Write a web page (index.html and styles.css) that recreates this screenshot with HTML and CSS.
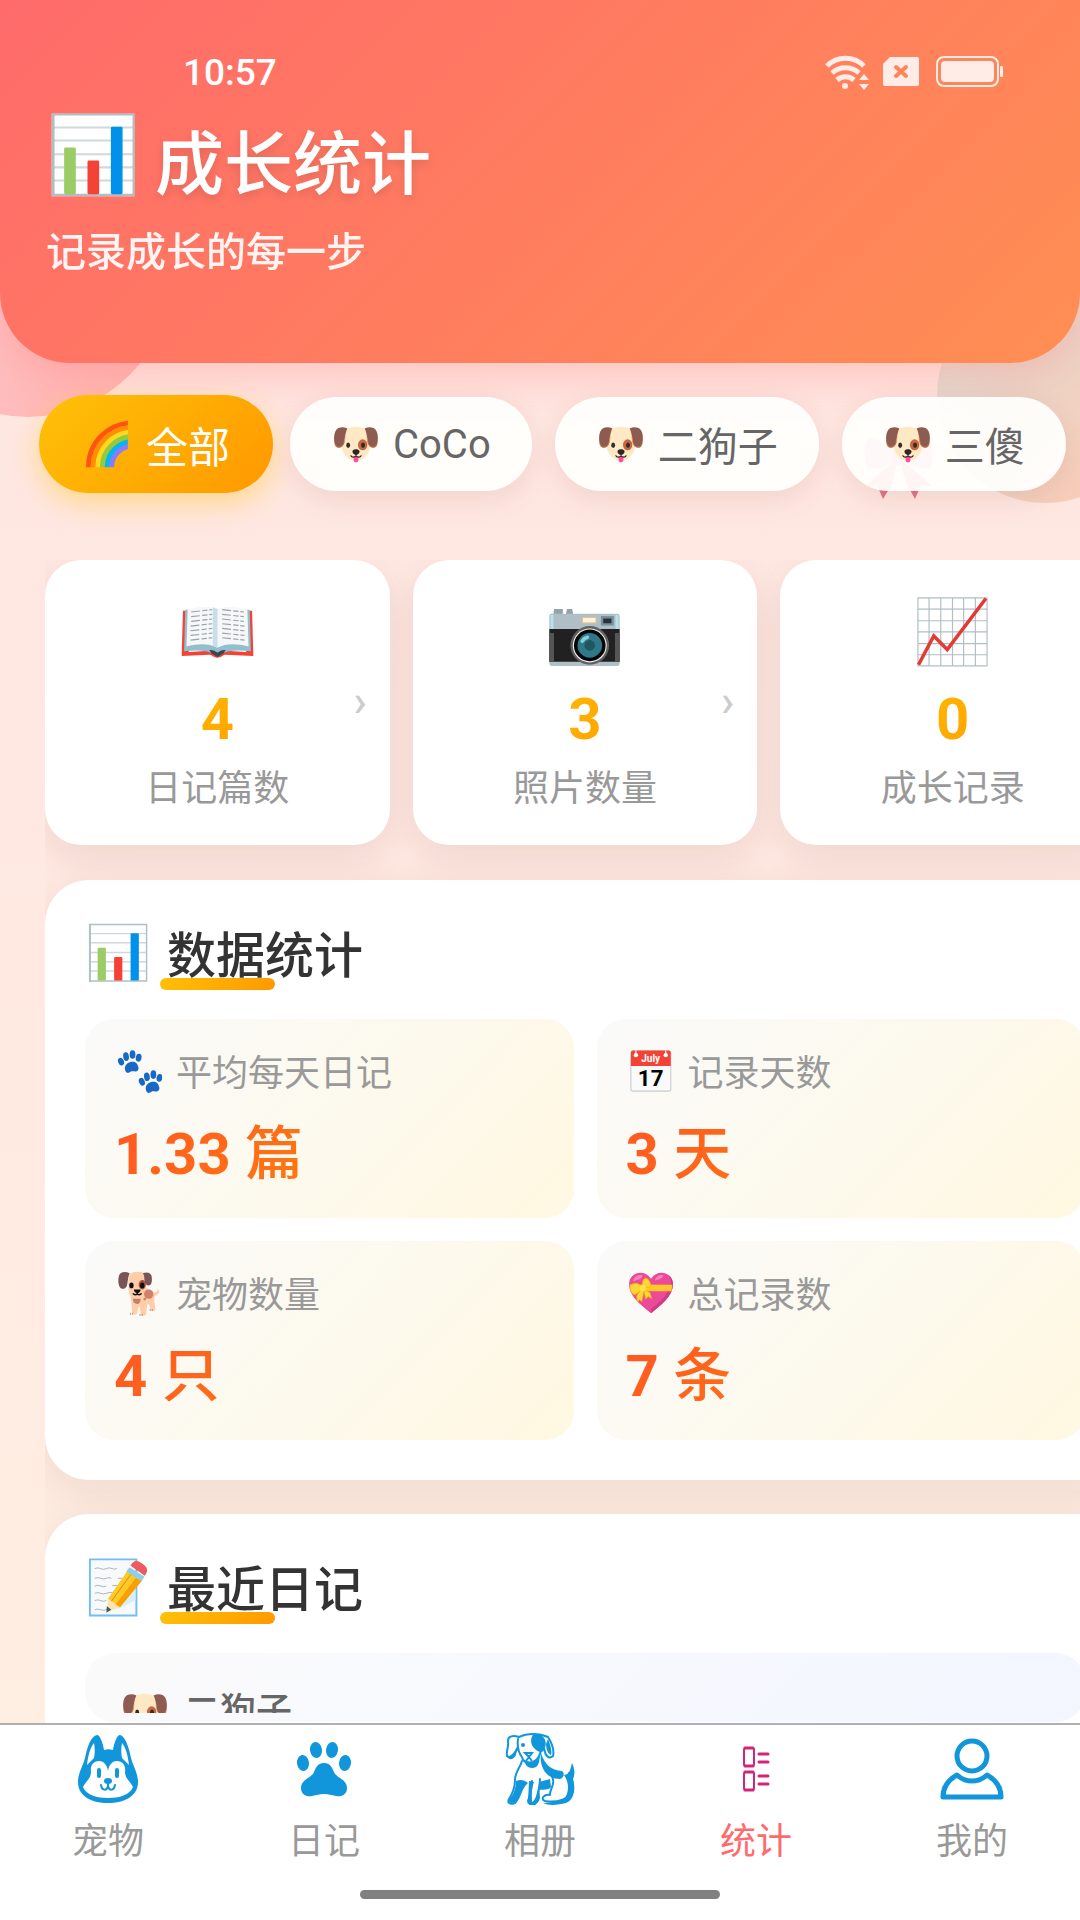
FILE: index.html
```html
<!DOCTYPE html>
<html lang="zh-CN">
<head>
    <meta charset="UTF-8">
    <meta name="viewport" content="width=device-width, initial-scale=1.0">
    <title>成长统计</title>
    <link rel="stylesheet" href="styles.css">
</head>
<body>
    <!-- Shared icons -->
    <svg class="sprite" aria-hidden="true">
        <symbol id="i-bars" viewBox="0 0 128 128">
            <path fill="#fff" d="M4 4h120v120H4z"/>
            <path stroke="#cfd8dc" stroke-width="3" d="M4 24h120M4 43h120M4 63h120M4 82h120M4 101h120"/>
            <path fill="none" stroke="#b0bec5" stroke-width="3" d="M6 5h117v117H6z"/>
            <path stroke="#b0bec5" stroke-width="4" d="M6 4v120"/>
            <rect x="22" y="53" width="17" height="68" rx="2" fill="#9ccc65"/>
            <rect x="56" y="72" width="17" height="49" rx="2" fill="#f44336"/>
            <rect x="90" y="23" width="17" height="98" rx="2" fill="#0091ea"/>
        </symbol>
        <symbol id="i-rainbow" viewBox="0 0 128 128">
            <clipPath id="rainbow-clip"><path d="M8 4h105v117H8z"/></clipPath>
            <g fill="none" stroke-width="12" clip-path="url(#rainbow-clip)">
                <circle cx="125" cy="121" r="109" stroke="#ff5216"/>
                <circle cx="125" cy="121" r="98" stroke="#ff8f00"/>
                <circle cx="125" cy="121" r="86" stroke="#fdd922"/>
                <circle cx="125" cy="121" r="75" stroke="#97c93c"/>
                <circle cx="125" cy="121" r="63" stroke="#00b8f0"/>
                <circle cx="125" cy="121" r="52" stroke="#8a7bfb"/>
            </g>
        </symbol>
        <symbol id="i-dogface" viewBox="0 0 128 128">
            <path fill="#ffe8c4" d="M64 20c22 0 32 9 35 25 2 15 4 28-3 41-6 12-18 22-32 22s-26-10-32-22c-7-13-5-26-3-41 3-16 13-25 35-25z"/>
            <ellipse cx="81" cy="66" rx="12" ry="14" fill="#c9663f"/>
            <path fill="#8d5b4f" d="M42 24c-12-5-25-3-30 6-5 9-5 25-2 36 2 8 10 10 18 5 7-5 6-15 8-26 1-8 3-15 6-21z"/>
            <path fill="#8d5b4f" d="M86 24c12-5 25-3 30 6 5 9 5 25 2 36-2 8-10 10-18 5-7-5-6-15-8-26-1-8-3-15-6-21z"/>
            <path fill="none" stroke="#dc8b5a" stroke-width="2" d="M10 63c3 10 11 12 19 6 6-5 5-14 7-24M118 63c-3 10-11 12-19 6-6-5-5-14-7-24"/>
            <ellipse cx="44" cy="67" rx="5" ry="7" fill="#302c2b"/>
            <ellipse cx="82" cy="67" rx="5" ry="7" fill="#302c2b"/>
            <path fill="#ff4b9b" d="M58 95h12v10c0 8-12 8-12 0z"/>
            <path fill="#2b2727" d="M55 82c2-6 16-6 18 0 1 6-5 10-9 10s-10-4-9-10z"/>
            <path fill="none" stroke="#2b2727" stroke-width="3" stroke-linecap="round" d="M64 90v5m0 0c-5 4-11 3-13-1m13 1c5 4 11 3 13-1"/>
        </symbol>
        <symbol id="i-bow" viewBox="0 0 72 66">
            <path fill="#e0566f" d="M31 27C20 38 11 42 5 52l9-1 6 14 8-13c3-9 5-16 6-23zM41 27c10 11 19 15 27 25l-10-1-6 14-7-13c-4-9-6-16-7-23z"/>
            <path fill="#f78fa7" d="M33 17C22 8 10 3 5 5 1 10 1 27 5 34c9 2 21-3 28-8zM39 17C50 8 62 3 67 5c4 5 4 22 0 29-9 2-21-3-28-8z"/>
            <rect x="29" y="13" width="14" height="18" rx="6" fill="#ef6c88"/>
        </symbol>
        <symbol id="i-book" viewBox="0 0 128 128">
            <path fill="#f44336" d="M5 27h10v72H3zM123 27h-10v72h12z"/>
            <path fill="#f44336" d="M3 98l46-3 15 9 15-9 46 3v6l-47-2c-5-1-6 5-14 5s-9-6-14-5l-47 2z"/>
            <path fill="#90bfce" d="M9 25h110l2 71c-20-2-39-3-57 7-18-10-37-9-57-7z"/>
            <path fill="#f5f7f8" d="M13 25c22-6 39-7 51 0v65c-15-8-33-7-53-2zM115 25c-22-6-39-7-51 0v65c15-8 33-7 53-2z"/>
            <path fill="#c9dfe7" d="M56 21l8 3v66l-8-4z"/>
            <path stroke="#9aa3a7" stroke-width="2" stroke-dasharray="15 4 9 3" d="M19 29l36-4M19 37l36-4M19 45l36-4M18 53l37-4M18 61l37-4M18 69l37-4M18 77l37-4M72 25l37 4M72 33l37 4M72 41l37 4M72 49l38 4M72 57l38 4M72 65l38 4M72 73l38 4"/>
            <path fill="#37474f" d="M50 94c7-1 9 2 14 4 5-2 7-5 14-4l-4 6-10 6-10-6z"/>
        </symbol>
        <symbol id="i-camera" viewBox="0 0 128 128">
            <path fill="#90a4ae" d="M12 24h15v10H11zM34 24h9l2 10H32z"/>
            <rect x="4" y="32" width="120" height="89" rx="4" fill="#b0bec5"/>
            <path fill="#b3e5ee" d="M6 34h5v24H6zM117 34h5v24h-5z"/>
            <path fill="#212121" d="M4 58h120v56H4z"/>
            <path fill="#555" d="M4 65h8v49H4zM116 65h8v49h-8z"/>
            <path fill="#fff3d4" stroke="#cbbd9f" stroke-width="2" d="M60 38h24v10H60z"/>
            <path fill="#263238" stroke="#78909c" stroke-width="4" d="M94 38h18v12H94z"/>
            <circle cx="73" cy="86" r="33" fill="#616161"/>
            <circle cx="73" cy="86" r="29" fill="#eee"/>
            <circle cx="73" cy="86" r="27" fill="#050505"/>
            <circle cx="73" cy="86" r="21" fill="#2f7889"/>
            <circle cx="73" cy="86" r="9" fill="#22565f"/>
            <path fill="none" stroke="#83cedd" stroke-width="6" stroke-linecap="round" d="M60 79c2-4 5-6 9-7"/>
        </symbol>
        <symbol id="i-trend" viewBox="0 0 128 128">
            <path fill="#fff" d="M4 4h119v117H4z"/>
            <path fill="none" stroke="#b0bec5" stroke-width="2" d="M5 5h118v116H5zM24 5v116M44 5v116M64 5v116M83 5v116M103 5v116M5 24h118M5 44h118M5 63h118M5 83h118M5 102h118"/>
            <path fill="none" stroke="#e53935" stroke-width="6" d="M6 119l26-49 23 23 66-87"/>
        </symbol>
        <symbol id="i-memo" viewBox="0 0 128 128">
            <path fill="#f7f9fa" stroke="#74bff2" stroke-width="4" d="M6 7h96v116H6z"/>
            <path fill="none" stroke="#a4b5be" stroke-width="2" d="M16 26q6-3 12 0t12 0 12 0 10-1M16 46q6-3 12 0t12 0 10 0M64 46h18M16 62q6-3 12 0t12 0M52 61h18M16 77q6-3 12 0t12 0 16-1M16 92q6-3 12 0t12 0M16 111q6-3 12 0t18-2"/>
            <path fill="#d8eefb" d="M100 62v29L68 108l-14 1z"/>
            <path fill="#ffca28" d="M84 30l30 20-46 56-25-17z"/>
            <path fill="#f9a000" d="M103 43l11 7-46 56-9-6z"/>
            <path stroke="#d88b00" stroke-width="2" d="M92 36L50 94"/>
            <path fill="#fae5b0" d="M43 89l25 17-26 10z"/>
            <path fill="#455a64" d="M41 103l9 8-10 6z"/>
            <path fill="#90cfe3" d="M88 23l31 20-7 9-31-20z"/>
            <path fill="#ee5a61" d="M90 20c6-12 13-12 23-5 12 8 15 15 6 26z"/>
        </symbol>
        <symbol id="i-paws" viewBox="0 0 128 128">
            <g id="paw-print" fill="#1769c5">
                <ellipse cx="14" cy="38" rx="8" ry="11" transform="rotate(-22 14 38)"/>
                <ellipse cx="28" cy="24" rx="8" ry="12" transform="rotate(-8 28 24)"/>
                <ellipse cx="46" cy="18" rx="8" ry="12"/>
                <ellipse cx="63" cy="27" rx="8" ry="11" transform="rotate(12 63 27)"/>
                <path d="M26 63c-5-13 5-24 18-25s16 7 18 14c3 9-3 14-11 13-8-1-9 0-14 3-6 3-9 0-11-5z"/>
            </g>
            <use href="#paw-print" x="58" y="56"/>
        </symbol>
        <symbol id="i-dog" viewBox="0 0 128 128">
            <path fill="#ffcda8" d="M39 12c7-9 34-9 42-1 6 10 6 24 1 36 8 7 16 13 22 15 8 2 12-2 12-9 7 6 5 15-8 19-2 5-2 13-1 19l3 19c-2 7-13 5-15 0-1-10-1-13-7-16-3 8-3 18-4 28-3 8-14 7-15-1l-4-20c-4 3-5 12-6 19-3 6-13 5-14-1-2-20-1-35-6-48-5-14-7-43 0-59z"/>
            <path fill="#795458" d="M38 9C27 3 13 4 9 14c-4 11-3 27 2 34 5 7 15 5 19-3 3-9 3-26 8-36zM75 9c12-5 23 0 24 8 2 10 1 22-4 25-12 4-15-5-16-16 0-7-1-12-4-17z"/>
            <ellipse cx="73" cy="41" rx="10" ry="13" fill="#a94f3f"/>
            <ellipse cx="91" cy="67" rx="13" ry="13" fill="#d18169"/>
            <path fill="#c77f68" d="M47 80h22c-1 12-6 16-12 14-7-1-10-6-10-14z"/>
            <circle cx="80" cy="81" r="4" fill="#d18169"/>
            <ellipse cx="43" cy="43" rx="6" ry="8" fill="#111"/>
            <ellipse cx="73" cy="43" rx="6" ry="8" fill="#111"/>
            <path fill="#111" d="M50 54h18c1 7-5 10-9 10s-10-4-9-10z"/>
            <path fill="none" stroke="#111" stroke-width="4" stroke-linecap="round" d="M59 63v4m0 0q-6 4-11-1m11 1q6 4 11-1"/>
            <path stroke="#b76b60" stroke-width="2" d="M40 119v6M46 119v6M67 122v6M73 122v6M95 109v5M101 109v5"/>
        </symbol>
        <symbol id="i-heart" viewBox="0 0 128 128">
            <path fill="#ec4a98" d="M64 120C35 97 3 73 3 39 3 7 45-5 64 24 83-5 125 7 125 39c0 34-32 58-61 81z"/>
            <path fill="#d03b85" d="M113 14c18 24 2 55-49 94v12c29-23 61-47 61-81 0-10-4-19-12-25z"/>
            <path fill="#f684b9" d="M14 31c2-13 14-18 26-17 2 8-9 14-26 17zM75 29c2-12 13-17 23-15 1 8-9 12-23 15z"/>
            <path fill="#ffca28" d="M5 40l118 1-2 18H9z"/>
            <path fill="#fdd835" stroke="#f4b400" stroke-width="2" d="M39 49C31 35 18 34 7 42c-3 11 2 22 10 27 9-2 18-9 22-20zM42 47c-4-14 0-24 9-24 10 5 15 20 10 25zM36 54l-12 18 2 16 7-6 5 6 7-32zM44 54l5 27 7-7 10 5-5-16z"/>
            <circle cx="41" cy="50" r="9" fill="#ffe246"/>
        </symbol>
    </svg>

    <div class="page">
        <span class="blob blob-left"></span>
        <span class="blob blob-right"></span>
        <svg class="bow" aria-hidden="true"><use href="#i-bow"/></svg>

        <header class="header">
            <div class="status-bar">
                <span class="time">10:57</span>
                <svg class="wifi" viewBox="0 0 44 36" aria-hidden="true">
                    <g fill="none" stroke="#ffece6" stroke-width="5">
                        <path d="M2 12a26 26 0 0 1 37 0"/>
                        <path d="M7 19a20 20 0 0 1 27 0"/>
                        <path d="M12 26a13 13 0 0 1 17 0"/>
                    </g>
                    <circle cx="20" cy="32" r="3" fill="#ffece6"/>
                    <path fill="#ffece6" d="M34 26l5-6 5 6zM34 30h10l-5 6z"/>
                </svg>
                <svg class="sim" viewBox="0 0 36 30" aria-hidden="true">
                    <path fill="#ffece6" d="M7 0h27q2 0 2 2v25q0 2-2 2H2q-2 0-2-2V7z"/>
                    <path stroke="#ff8559" stroke-width="4" stroke-linecap="round" d="M13 10l10 9M23 10l-10 9"/>
                </svg>
                <svg class="battery" viewBox="0 0 68 32" aria-hidden="true">
                    <rect x="1" y="1" width="61" height="29" rx="7" fill="none" stroke="#ffece6" stroke-width="2"/>
                    <rect x="5" y="5" width="53" height="21" rx="4" fill="#ffece6"/>
                    <rect x="64" y="10" width="3" height="11" rx="1" fill="#ffece6"/>
                </svg>
            </div>
            <h1 class="title">
                <svg class="title-icon" aria-hidden="true"><use href="#i-bars"/></svg>
                <span>成长统计</span>
            </h1>
            <p class="subtitle">记录成长的每一步</p>
        </header>

        <div class="filters">
            <button class="chip chip-active"><svg class="chip-icon" aria-hidden="true"><use href="#i-rainbow"/></svg>全部</button>
            <button class="chip"><svg class="chip-icon" aria-hidden="true"><use href="#i-dogface"/></svg>CoCo</button>
            <button class="chip"><svg class="chip-icon" aria-hidden="true"><use href="#i-dogface"/></svg>二狗子</button>
            <button class="chip"><svg class="chip-icon" aria-hidden="true"><use href="#i-dogface"/></svg>三傻</button>
        </div>

        <main class="content">
            <div class="content-inner">
                <div class="cards">
                    <a class="card" href="#diary">
                        <svg class="card-icon" aria-hidden="true"><use href="#i-book"/></svg>
                        <span class="card-number">4</span>
                        <span class="card-label">日记篇数</span>
                        <span class="card-arrow">›</span>
                    </a>
                    <a class="card" href="#photos">
                        <svg class="card-icon" aria-hidden="true"><use href="#i-camera"/></svg>
                        <span class="card-number">3</span>
                        <span class="card-label">照片数量</span>
                        <span class="card-arrow">›</span>
                    </a>
                    <a class="card" href="#growth">
                        <svg class="card-icon" aria-hidden="true"><use href="#i-trend"/></svg>
                        <span class="card-number">0</span>
                        <span class="card-label">成长记录</span>
                    </a>
                </div>

                <section class="panel">
                    <h2 class="panel-title">
                        <svg class="panel-icon" aria-hidden="true"><use href="#i-bars"/></svg>
                        <span class="panel-text">数据统计</span>
                    </h2>
                    <div class="data-grid">
                        <div class="data-item">
                            <div class="data-label"><svg class="data-icon" aria-hidden="true"><use href="#i-paws"/></svg>平均每天日记</div>
                            <div class="data-value">1.33 <span class="unit">篇</span></div>
                        </div>
                        <div class="data-item">
                            <div class="data-label">
                                <svg class="data-icon" viewBox="0 0 128 128" aria-hidden="true">
                                    <rect x="8" y="8" width="111" height="112" rx="6" fill="#fafafa" stroke="#c5cdd1" stroke-width="3"/>
                                    <path fill="#f44336" d="M8 13q0-6 6-6h99q6 0 6 6v37H8z"/>
                                    <circle cx="22" cy="20" r="6" fill="#fff"/>
                                    <circle cx="105" cy="20" r="6" fill="#fff"/>
                                    <path stroke="#fff" stroke-width="3" d="M22 6v12M105 6v12"/>
                                    <text x="63" y="38" class="cal-month">July</text>
                                    <text x="63" y="107" class="cal-day">17</text>
                                </svg>记录天数</div>
                            <div class="data-value">3 <span class="unit">天</span></div>
                        </div>
                        <div class="data-item">
                            <div class="data-label"><svg class="data-icon" aria-hidden="true"><use href="#i-dog"/></svg>宠物数量</div>
                            <div class="data-value">4 <span class="unit">只</span></div>
                        </div>
                        <div class="data-item">
                            <div class="data-label"><svg class="data-icon" aria-hidden="true"><use href="#i-heart"/></svg>总记录数</div>
                            <div class="data-value">7 <span class="unit">条</span></div>
                        </div>
                    </div>
                </section>

                <section class="panel" id="diary">
                    <h2 class="panel-title">
                        <svg class="panel-icon" aria-hidden="true"><use href="#i-memo"/></svg>
                        <span class="panel-text">最近日记</span>
                    </h2>
                    <div class="diary-item">
                        <div class="diary-head"><svg class="chip-icon" aria-hidden="true"><use href="#i-dogface"/></svg>二狗子</div>
                    </div>
                </section>
            </div>
        </main>

        <footer class="footer">
            <nav class="tabs">
                <a class="tab" href="#pets">
                    <svg class="tab-icon" viewBox="-4 0 72 72" aria-hidden="true">
                        <path fill="#1296db" d="M21 2c3 0 6 8 7 15 3-1 6-1 9 0 1-7 4-15 7-15 5 1 9 12 11 23 2 8 7 15 7 24 0 14-13 21-30 21S2 63 2 49c0-9 5-16 7-24C11 14 15 3 21 2z"/>
                        <path fill="#fff" d="M18 10c-4 5-6 13-7 22l7-7c1-5 1-10 0-15zM46 10c4 5 6 13 7 22l-7-7c-1-5-1-10 0-15z"/>
                        <path fill="#fff" d="M32 38c-1-7-5-10-9-10-6 0-9 5-8 11 0 7-6 10-8 15 3 8 14 11 25 11s22-3 25-11c-2-5-8-8-8-15 1-6-2-11-8-11-4 0-8 3-9 10z"/>
                        <rect x="21" y="35" width="4" height="10" rx="2" fill="#1296db"/>
                        <rect x="39" y="35" width="4" height="10" rx="2" fill="#1296db"/>
                        <ellipse cx="32" cy="48" rx="4" ry="3" fill="#1296db"/>
                        <path fill="none" stroke="#1296db" stroke-width="2" stroke-linecap="round" d="M25 52c1 6 6 6 7 1 1 5 6 5 7-1M32 50v3"/>
                    </svg>
                    <span>宠物</span>
                </a>
                <a class="tab" href="#diaries">
                    <svg class="tab-icon" viewBox="-4 -5 72 72" aria-hidden="true">
                        <g fill="#1296db">
                            <ellipse cx="11" cy="25" rx="6" ry="8" transform="rotate(-8 11 25)"/>
                            <ellipse cx="24" cy="12" rx="6" ry="8" transform="rotate(-8 24 12)"/>
                            <ellipse cx="40" cy="12" rx="6" ry="8" transform="rotate(8 40 12)"/>
                            <ellipse cx="53" cy="25" rx="6" ry="8" transform="rotate(8 53 25)"/>
                            <path d="M32 25c6 0 8 4 10 9 2 6 13 7 13 16 0 7-6 9-11 8-5-1-7-2-12-2s-7 1-12 2c-5 1-11-1-11-8 0-9 11-10 13-16 2-5 4-9 10-9z"/>
                        </g>
                    </svg>
                    <span>日记</span>
                </a>
                <a class="tab" href="#photos">
                    <svg class="tab-icon" viewBox="0 2 72 72" aria-hidden="true">
                        <g fill="none" stroke="#1296db" stroke-width="2" stroke-linejoin="round" stroke-linecap="round">
                            <path d="M15 6C9 4 4 5 4 10c1 6-2 9-1 15 4 4 8-2 11-9M15 6c8-4 20-4 29 0 5 8 6 15 5 19-3 3-7 1-8-4L38 9M14 8c-1 8 0 13 4 18 1 5 6 6 11 5 5-2 8-8 8-14"/>
                            <path d="M18 30c-2 7-7 11-7 19 0 7-2 13-6 19-2 4 1 6 6 4 6-6 5-14 11-20M28 50c0 8-2 14-4 20 0 4 7 5 8 1 2-9 4-16 4-23M47 44c6 8-2 15-1 20-6-1-10 4-5 6 12 2 24-2 26-8 2-6 2-14-2-20"/>
                        </g>
                        <g fill="#1296db">
                            <path d="M30 3c8-1 14 5 11 14-1 5-6 5-10 1-5-4-5-12-1-15z"/>
                            <path d="M44 8c3 7 4 13 3 16-3-1-5-6-5-11zM4 25c3 0 6-3 9-9l-1 8c-3 6-9 5-8 1z"/>
                            <path d="M20 29c5 5 12 3 16-4-1 8-2 12-8 12-4 0-7-3-8-8zM37 22c4 12 10 17 21 18 3 2 2 7-2 8-13 0-21-11-19-26z"/>
                            <path d="M12 50c5-2 8-1 12 2-6 5-8 14-12 19-5 2-8 1-8-3 5-1 8-11 8-18zM25 50l5 1c-3 7-2 15-2 20 3-1 6-10 7-18l1 14c-2 9-12 9-12 4zM35 51l11-3 1 8c-3 4-9 2-12 3z"/>
                            <path d="M60 44c6-1 6-5 8-12 3 6 3 12 1 16 3 10 1 21-7 24-8 2-17 3-23 0 10-1 21-1 24-9 2-7 1-13-3-19z"/>
                        </g>
                        <circle cx="19" cy="14" r="2" fill="#1296db"/>
                        <path fill="none" stroke="#1296db" stroke-width="2" d="M21 22h7l-3 4zM25 26l-3 4M25 26l3 4"/>
                    </svg>
                    <span>相册</span>
                </a>
                <a class="tab tab-active" href="#stats">
                    <svg class="tab-icon" viewBox="-4 -4 72 72" aria-hidden="true">
                        <g fill="none" stroke="#d4237a" stroke-width="2">
                            <rect x="20" y="11" width="10" height="18" rx="2"/>
                            <rect x="20" y="35" width="10" height="18" rx="2"/>
                            <path stroke-width="3" stroke-linecap="round" d="M21 11h8M21 29h8M21 35h8M21 53h8M35 17h9M35 25h9M35 39h9M35 47h9"/>
                        </g>
                    </svg>
                    <span>统计</span>
                </a>
                <a class="tab" href="#me">
                    <svg class="tab-icon" viewBox="-4 -4 72 72" aria-hidden="true">
                        <g fill="none" stroke="#1296db" stroke-width="5" stroke-linejoin="round">
                            <circle cx="32" cy="19" r="15"/>
                            <path d="M17 38c9 8 21 8 30 0 9 5 14 13 14 22H3c0-9 5-17 14-22z"/>
                        </g>
                    </svg>
                    <span>我的</span>
                </a>
            </nav>
            <div class="home-bar"></div>
        </footer>
    </div>
</body>
</html>
```

FILE: styles.css
```css
* {
    box-sizing: border-box;
}
body {
    margin: 0;
    font-family: Roboto, "Noto Sans CJK SC", sans-serif;
    color: #333;
}
h1, h2, p {
    margin: 0;
}
a {
    color: inherit;
    text-decoration: none;
}
svg {
    display: block;
    flex: none;
}
.sprite {
    position: absolute;
    width: 0;
    height: 0;
}
.page {
    position: relative;
    display: flex;
    flex-direction: column;
    height: 100vh;
    overflow: hidden;
    background: linear-gradient(180deg, #ffe5e1 0%, #ffe8e1 40%, #ffefe2 100%);
}

/* background decoration */
.blob {
    position: absolute;
    border-radius: 50%;
}
.blob-left {
    left: -116px;
    top: 129px;
    width: 288px;
    height: 288px;
    background: linear-gradient(135deg, #ffd0d6, #ffb3b0);
}
.blob-right {
    right: -73px;
    top: 287px;
    width: 216px;
    height: 216px;
    background: linear-gradient(135deg, rgba(78, 205, 196, 0.2), rgba(255, 142, 83, 0.34));
}
.bow {
    position: absolute;
    top: 434px;
    right: 145px;
    width: 72px;
    height: 66px;
    opacity: 0.8;
}

/* header */
.header {
    position: relative;
    padding: 52px 46px 82px;
    color: #fff;
    background: linear-gradient(135deg, #ff6b6b 0%, #ff8e53 100%);
    border-radius: 0 0 70px 70px;
    box-shadow: 0 12px 46px rgba(255, 107, 107, 0.3);
}
.status-bar {
    display: flex;
    align-items: center;
    height: 40px;
    padding: 0 30px 0 137px;
}
.time {
    margin-right: auto;
    font-size: 37px;
    font-weight: 500;
}
.wifi {
    width: 44px;
    height: 36px;
}
.sim {
    width: 36px;
    height: 30px;
    margin: 0 17px 0 14px;
}
.battery {
    width: 68px;
    height: 32px;
}
.title {
    display: flex;
    align-items: center;
    gap: 18px;
    margin-top: 19px;
    padding-left: 3px;
    font-size: 69px;
    font-weight: 500;
    line-height: 96px;
    text-shadow: 0 4px 10px rgba(0, 0, 0, 0.12);
}
.title-icon {
    width: 88px;
    height: 88px;
    margin-bottom: 22px;
}
.subtitle {
    margin-top: 4px;
    font-size: 40px;
    font-weight: 500;
    line-height: 56px;
    opacity: 0.92;
}

/* pet filter */
.filters {
    position: relative;
    display: flex;
    gap: 23px;
    padding: 34px 0 69px 45px;
    white-space: nowrap;
}
.chip {
    display: flex;
    flex: none;
    align-items: center;
    gap: 12px;
    height: 94px;
    padding: 0 41px;
    border: 0;
    border-radius: 58px;
    font: inherit;
    font-size: 40px;
    color: #666;
    background: rgba(255, 255, 253, 0.93);
    box-shadow: 0 8px 28px rgba(120, 40, 40, 0.1);
}
.chip-active {
    height: 98px;
    margin: -2px -6px;
    padding: 0 43px;
    font-size: 42px;
    color: #fff;
    background: linear-gradient(135deg, #ffc107, #ff9800);
    box-shadow: 0 10px 28px rgba(255, 193, 7, 0.4);
}
.chip-icon {
    width: 50px;
    height: 50px;
}
.chip-active .chip-icon {
    width: 52px;
    height: 52px;
}

/* scrolling content */
.content {
    flex: 1;
    min-height: 0;
    margin-left: 45px;
    overflow: hidden;
}
.content-inner {
    width: 100vw;
}
.cards {
    display: grid;
    grid-template-columns: repeat(3, 1fr);
    gap: 23px;
    margin-bottom: 35px;
}
.card {
    position: relative;
    display: flex;
    flex-direction: column;
    align-items: center;
    padding: 35px 23px 31px;
    background: #fff;
    border-radius: 36px;
    box-shadow: 0 12px 36px rgba(80, 20, 0, 0.09);
}
.card-icon {
    width: 75px;
    height: 75px;
}
.card-number {
    margin-top: 14px;
    font-size: 58px;
    font-weight: 700;
    line-height: 70px;
    color: transparent;
    background: linear-gradient(135deg, #ffb800, #ffa200);
    background-clip: text;
    -webkit-background-clip: text;
}
.card-label {
    margin-top: 10px;
    font-size: 36px;
    line-height: 50px;
    color: #999;
}
.card-arrow {
    position: absolute;
    top: 50%;
    right: 23px;
    margin-top: -25px;
    font-size: 44px;
    font-weight: 500;
    line-height: 46px;
    color: #ccc;
}
.panel {
    margin-bottom: 34px;
    padding: 40px;
    background: #fff;
    border-radius: 44px;
    box-shadow: 0 12px 46px rgba(80, 20, 0, 0.09);
}
.panel-title {
    display: flex;
    align-items: center;
    gap: 18px;
    margin-bottom: 29px;
    padding-left: 2px;
    font-size: 49px;
    font-weight: 500;
    line-height: 66px;
}
.panel-icon {
    width: 62px;
    height: 62px;
    margin-bottom: 4px;
}
.panel-text {
    position: relative;
    z-index: 0;
    padding-top: 4px;
}
.panel-text::before {
    content: "";
    position: absolute;
    left: -7px;
    bottom: 0;
    z-index: -1;
    width: 115px;
    height: 12px;
    border-radius: 6px;
    background: linear-gradient(135deg, #ffc107, #ff9800);
}
.data-grid {
    display: grid;
    grid-template-columns: 1fr 1fr;
    gap: 23px;
}
.data-item {
    padding: 29px;
    border-radius: 29px;
    background: linear-gradient(135deg, #fafafa 0%, #fff8e1 100%);
}
.data-label {
    display: flex;
    align-items: flex-start;
    gap: 14px;
    padding-left: 2px;
    font-size: 36px;
    line-height: 52px;
    color: #999;
}
.data-icon {
    width: 46px;
    height: 46px;
}
.data-value {
    margin-top: 19px;
    font-size: 58px;
    font-weight: 700;
    line-height: 70px;
    color: transparent;
    background: linear-gradient(135deg, #ff5722, #ff9800);
    background-clip: text;
    -webkit-background-clip: text;
}
.unit {
    font-weight: 500;
}
.diary-item {
    height: 69px;
    padding: 33px 35px 9px;
    border-radius: 29px;
    background: linear-gradient(135deg, #fafafa 0%, #f8f9fe 40%, #f3f6ff 100%);
}
.diary-head {
    display: flex;
    align-items: flex-start;
    gap: 14px;
    height: 27px;
    overflow: hidden;
    font-size: 36px;
    font-weight: 500;
    line-height: 52px;
    color: #666;
}
.cal-month, .cal-day {
    font-family: Roboto, sans-serif;
    font-weight: 700;
    text-anchor: middle;
}
.cal-month {
    font-size: 28px;
    fill: #fff;
}
.cal-day {
    font-size: 62px;
    fill: #000;
}

/* bottom tabs */
.footer {
    position: relative;
    border-top: 2px solid #b0b0b0;
    background: #fff;
}
.tabs {
    display: grid;
    grid-template-columns: repeat(5, 1fr);
    padding-top: 8px;
}
.tab {
    display: flex;
    flex-direction: column;
    align-items: center;
    gap: 15px;
    font-size: 36px;
    line-height: 44px;
    color: #999;
}
.tab-icon {
    width: 72px;
    height: 72px;
}
.tab-active {
    color: #ff6b6b;
}
.home-bar {
    width: 33.33%;
    height: 9px;
    margin: 26px auto 21px;
    border-radius: 5px;
    background: #808080;
}
```
